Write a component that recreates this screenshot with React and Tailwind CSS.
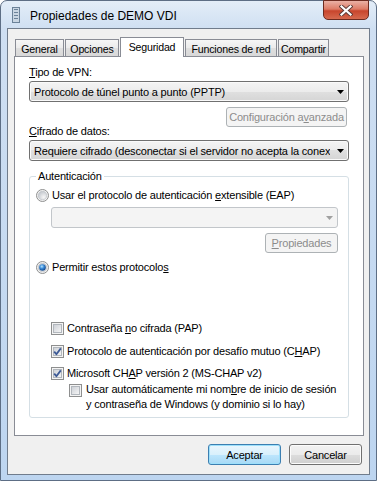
import clsx from 'clsx'

function Arrow({ disabled }) {
  return (
    <svg width="7" height="4" viewBox="0 0 7 4" className="shrink-0">
      <polygon points="0,0 7,0 3.5,4" fill={disabled ? '#a0a0a0' : '#000'} />
    </svg>
  )
}

function Combo({ children, disabled, className }) {
  return (
    <div
      className={clsx(
        'h-[21px] rounded-[3px] border flex items-center pl-[4px] pr-[4px]',
        disabled
          ? 'border-[#c2c6ca] bg-[#f4f4f4]'
          : 'border-[#707070] bg-[linear-gradient(#f4f4f4,#ececec_50%,#e0e0e0_50%,#d5d5d5)] shadow-[inset_0_0_0_1px_#fafafa]',
        className
      )}
    >
      <span className="flex-1 overflow-hidden whitespace-nowrap mr-[7px] leading-[14px]">{children}</span>
      <Arrow disabled={disabled} />
    </div>
  )
}

function Btn({ children, disabled, primary, className }) {
  return (
    <div
      className={clsx(
        'h-[20px] rounded-[3px] border flex items-center justify-center leading-[14px]',
        disabled && 'border-[#adb2b5] bg-[#f4f4f4] text-[#8c8c8c]',
        primary &&
          'border-[#3c7fb1] bg-[linear-gradient(#eaf6fd,#d9f0fc_50%,#bee6fd_50%,#a7d9f5)] shadow-[inset_0_0_0_1px_#9de0fb]',
        !disabled &&
          !primary &&
          'border-[#707070] bg-[linear-gradient(#f2f2f2,#ebebeb_50%,#dddddd_50%,#cfcfcf)] shadow-[inset_0_0_0_1px_#fcfcfc]',
        className
      )}
    >
      {children}
    </div>
  )
}

function Check({ checked }) {
  return (
    <svg width="13" height="13" viewBox="0 0 13 13" className="shrink-0">
      <defs>
        <linearGradient id="cbfill" x1="0" y1="0" x2="1" y2="1">
          <stop offset="0" stopColor="#cbcfd5" />
          <stop offset="1" stopColor="#f7f7f7" />
        </linearGradient>
      </defs>
      <rect x="0.5" y="0.5" width="12" height="12" fill="#f4f4f4" stroke="#8e8f8f" />
      <rect x="2.5" y="2.5" width="8" height="8" fill="url(#cbfill)" stroke="#b2b7bd" />
      {checked && (
        <polyline
          points="3.2,6.6 5.4,9.2 9.8,3.4"
          fill="none"
          stroke="#3d5a96"
          strokeWidth="1.8"
          strokeLinejoin="round"
        />
      )}
    </svg>
  )
}

function Radio({ checked }) {
  return (
    <svg width="13" height="13" viewBox="0 0 13 13" className="shrink-0">
      <defs>
        <radialGradient id="rdfill" cx="0.65" cy="0.7" r="0.7">
          <stop offset="0" stopColor="#f7f7f7" />
          <stop offset="1" stopColor="#c4c8ce" />
        </radialGradient>
        <radialGradient id="rddot" cx="0.4" cy="0.35" r="0.7">
          <stop offset="0" stopColor="#b8e6ff" />
          <stop offset="0.45" stopColor="#3a8ad6" />
          <stop offset="1" stopColor="#0c3c80" />
        </radialGradient>
      </defs>
      <circle cx="6.5" cy="6.5" r="6" fill="#f3f3f3" stroke="#8e8f8f" />
      <circle cx="6.5" cy="6.5" r="4.3" fill="url(#rdfill)" stroke="#b9bdc2" strokeWidth="0.6" />
      {checked && <circle cx="6.5" cy="6.5" r="3.3" fill="url(#rddot)" />}
    </svg>
  )
}

function Tab({ children, active, w }) {
  return (
    <div
      className={clsx(
        'border border-b-0 border-[#898c95] flex justify-center leading-[14px] whitespace-nowrap text-[10.6px]',
        w,
        active
          ? 'h-[20px] bg-white relative z-10 mb-[-1px] items-start pt-[2px]'
          : 'h-[17px] bg-[linear-gradient(#f6f6f6,#ebebeb_50%,#dfdfdf_50%,#d8d8d8)] items-center pt-[1px]'
      )}
    >
      {children}
    </div>
  )
}

export default function App() {
  return (
    <div className="w-[377px] h-[481px] bg-white font-['Liberation_Sans',Arial,sans-serif] text-[11px] tracking-[-0.18px] text-black">
      <div className="w-[377px] h-[481px] rounded-t-[7px] border border-[#5d6e85] bg-[linear-gradient(#e3edf8,#cfdff2_28px,#bdd5f0)] flex flex-col">
        {/* title bar */}
        <div className="h-[27px] flex">
          <div className="flex items-center h-[27px] pl-[11px]">
            <svg width="8" height="16" viewBox="0 0 8 16">
              <rect x="0.5" y="0.5" width="7" height="15" fill="#c9d6e3" stroke="#6b8299" />
              <rect x="2" y="2" width="4" height="1" fill="#6b8299" />
              <rect x="2" y="5" width="4" height="1" fill="#6b8299" />
              <rect x="2" y="8" width="4" height="1" fill="#6b8299" />
              <rect x="2" y="11" width="4" height="1" fill="#6b8299" />
            </svg>
            <span className="ml-[10px] text-[12px] tracking-normal leading-[14px] mt-[2px]">Propiedades de DEMO VDI</span>
          </div>
          <div className="ml-auto mr-[7px] mt-[-1px] w-[46px] h-[20px] rounded-b-[5px] border border-[#6d2b20] bg-[linear-gradient(#eab1a5,#dd7b66_45%,#c8452d_55%,#d66a4f)] flex items-center justify-center">
            <svg width="14" height="11" viewBox="0 0 14 11">
              <path d="M2.5 1.5 L11.5 9.5 M11.5 1.5 L2.5 9.5" stroke="#5a3a36" strokeWidth="4" strokeLinecap="square" />
              <path d="M2.5 1.5 L11.5 9.5 M11.5 1.5 L2.5 9.5" stroke="#fff" strokeWidth="2.2" strokeLinecap="square" />
            </svg>
          </div>
        </div>

        {/* client area */}
        <div className="mx-[6px] h-[447px] border border-[#707c8c] bg-[#f0f0f0] flex flex-col">
          <div className="flex items-end gap-[1px] pt-[8px] pl-[7px]">
            <Tab w="w-[49px]">General</Tab>
            <Tab w="w-[54px]">Opciones</Tab>
            <Tab w="w-[64px]" active>Seguridad</Tab>
            <Tab w="w-[92px]">Funciones de red</Tab>
            <Tab w="w-[51px]">Compartir</Tab>
          </div>

          <div className="ml-[6px] w-[350px] h-[380px] border border-[#898c95] bg-white px-[14px] flex flex-col">
            <div className="mt-[8px] leading-[14px]">
              <u>T</u>ipo de VPN:
            </div>
            <Combo className="mt-[2px]">Protocolo de túnel punto a punto (PPTP)</Combo>
            <div className="mt-[5px] flex justify-end pr-[2px]">
              <Btn disabled className="w-[121px]">
                Configuración a<u>v</u>anzada
              </Btn>
            </div>
            <div className="mt-[-3px] leading-[14px]">
              <u>C</u>ifrado de datos:
            </div>
            <Combo className="mt-[2px]">Requiere cifrado (desconectar si el servidor no acepta la conexión)</Combo>

            <fieldset className="mt-[8px] w-[320px] border border-[#d5dfe5] rounded-[3px] pb-[5px]">
              <legend className="ml-[6px] px-[2px] leading-[14px]">Autenticación</legend>
              <div className="mt-[4px] h-[16px] flex items-center pl-[6px] gap-[3px]">
                <Radio />
                <span className="leading-[14px]">
                  Usar el protocolo de autenticación <u>e</u>xtensible (EAP)
                </span>
              </div>
              <Combo disabled className="mt-[4px] ml-[21px] w-[287px]"></Combo>
              <div className="mt-[5px] ml-[21px] w-[287px] flex justify-end">
                <Btn disabled className="w-[73px]">
                  <u>P</u>ropiedades
                </Btn>
              </div>
              <div className="mt-[6px] h-[16px] flex items-center pl-[6px] gap-[3px]">
                <Radio checked />
                <span className="leading-[14px]">
                  Permitir estos protocolo<u>s</u>
                </span>
              </div>

              <div className="mt-[45px] h-[16px] flex items-center ml-[21px] gap-[3px]">
                <Check />
                <span className="leading-[14px]">
                  Contraseña <u>n</u>o cifrada (PAP)
                </span>
              </div>
              <div className="mt-[7px] h-[16px] flex items-center ml-[21px] gap-[3px]">
                <Check checked />
                <span className="leading-[14px]">
                  Protocolo de autenticación por desafío mutuo (C<u>H</u>AP)
                </span>
              </div>
              <div className="mt-[6px] h-[16px] flex items-center ml-[21px] gap-[3px]">
                <Check checked />
                <span className="leading-[14px]">
                  Microsoft CH<u>A</u>P versión 2 (MS-CHAP v2)
                </span>
              </div>
              <div className="mt-[1px] flex items-start ml-[39px] gap-[4px]">
                <div className="mt-[2px]">
                  <Check />
                </div>
                <span className="leading-[15px]">
                  Usar automáticamente mi nom<u>b</u>re de inicio de sesión
                  <br />y contraseña de Windows (y dominio si lo hay)
                </span>
              </div>
            </fieldset>
          </div>

          <div className="mt-[8px] flex justify-end gap-[8px] pr-[7px]">
            <Btn primary className="w-[73px] h-[21px]">Aceptar</Btn>
            <Btn className="w-[73px] h-[21px]">Cancelar</Btn>
          </div>
        </div>
      </div>
    </div>
  )
}
